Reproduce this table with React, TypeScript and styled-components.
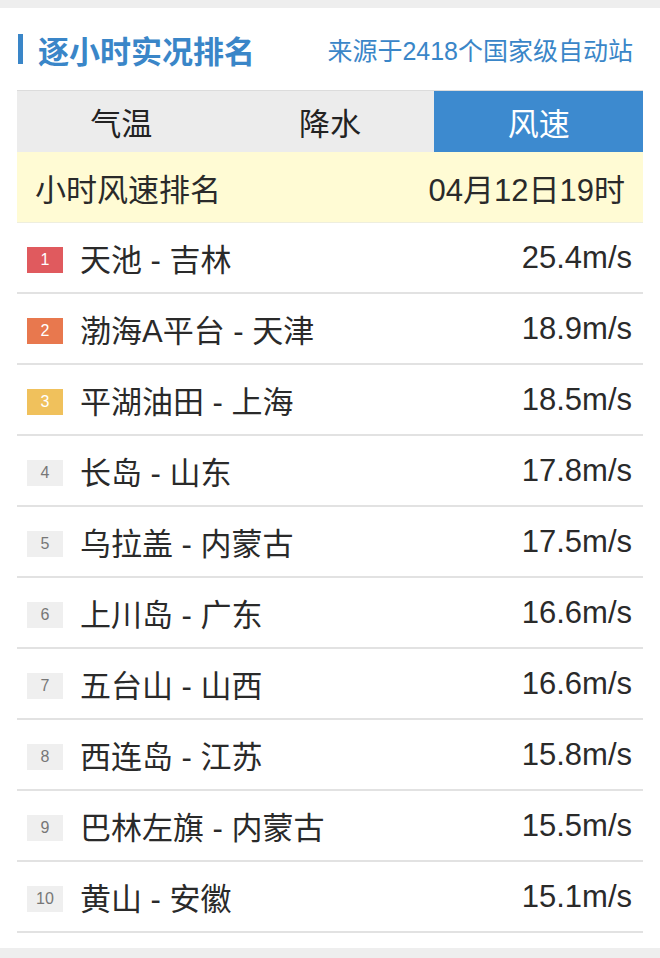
import React from "react";
import styled, { createGlobalStyle } from "styled-components";

const Global = createGlobalStyle`
  html, body { margin: 0; padding: 0; background: #ffffff; }
  body { font-family: "Liberation Sans", "Noto Sans CJK SC", sans-serif; color: #333; }
`;

const Page = styled.div`
  width: 660px;
  height: 958px;
  display: flex;
  flex-direction: column;
  background: #fff;
`;

const Strip = styled.div<{ h: number }>`
  height: ${(p) => p.h}px;
  background: #eeeeee;
  flex-shrink: 0;
`;

const Header = styled.div`
  height: 82px;
  display: flex;
  align-items: center;
  justify-content: space-between;
  padding: 0 27px 0 18px;
`;

const Title = styled.h1`
  margin: 0;
  display: flex;
  align-items: center;
  gap: 15px;
  font-size: 31px;
  font-weight: bold;
  color: #3a86c8;
  font-family: "Noto Sans CJK SC", sans-serif;
  &::before {
    content: "";
    width: 5px;
    height: 30px;
    background: #3a86c8;
  }
`;

const Source = styled.div`
  font-size: 25px;
  color: #3a86c8;
`;

const Card = styled.div`
  margin: 0 17px;
  flex: 1;
`;

const Tabs = styled.div`
  display: grid;
  grid-template-columns: repeat(3, 1fr);
  background: #ececec;
  border-top: 1px solid #dcdcdc;
  height: 61px;
`;

const Tab = styled.div<{ active?: boolean }>`
  display: flex;
  align-items: center;
  justify-content: center;
  font-size: 31px;
  font-family: "Noto Sans CJK SC", sans-serif;
  color: ${(p) => (p.active ? "#fff" : "#222")};
  background: ${(p) => (p.active ? "#3d8acf" : "transparent")};
`;

const SubHeader = styled.div`
  height: 70px;
  background: #fffbd4;
  display: flex;
  align-items: center;
  justify-content: space-between;
  padding: 0 18px;
  font-size: 31px;
  color: #2a2a2a;
  border-bottom: 1px solid #eeeede;
`;

const Row = styled.div`
  height: 69px;
  display: flex;
  align-items: center;
  padding: 0 11px 0 10px;
  border-bottom: 2px solid #e2e2e2;
`;

const badgeColors = ["#e05a5e", "#e8784e", "#f0c15c"];

const Badge = styled.span<{ rank: number }>`
  width: 36px;
  height: 26px;
  display: flex;
  align-items: center;
  justify-content: center;
  font-size: 16px;
  flex-shrink: 0;
  background: ${(p) => (p.rank <= 3 ? badgeColors[p.rank - 1] : "#efefef")};
  color: ${(p) => (p.rank <= 3 ? "#fff" : "#777")};
  margin-top: 4px;
`;

const Name = styled.span`
  margin-left: 17px;
  font-size: 31px;
  color: #2a2a2a;
  flex: 1;
`;

const Value = styled.span`
  font-size: 31px;
  color: #2a2a2a;
`;

const rows = [
  ["天池 - 吉林", "25.4m/s"],
  ["渤海A平台 - 天津", "18.9m/s"],
  ["平湖油田 - 上海", "18.5m/s"],
  ["长岛 - 山东", "17.8m/s"],
  ["乌拉盖 - 内蒙古", "17.5m/s"],
  ["上川岛 - 广东", "16.6m/s"],
  ["五台山 - 山西", "16.6m/s"],
  ["西连岛 - 江苏", "15.8m/s"],
  ["巴林左旗 - 内蒙古", "15.5m/s"],
  ["黄山 - 安徽", "15.1m/s"],
];

export default function App() {
  return (
    <>
      <Global />
      <Page>
        <Strip h={8} />
        <Header>
          <Title>逐小时实况排名</Title>
          <Source>来源于2418个国家级自动站</Source>
        </Header>
        <Card>
          <Tabs>
            <Tab>气温</Tab>
            <Tab>降水</Tab>
            <Tab active>风速</Tab>
          </Tabs>
          <SubHeader>
            <span>小时风速排名</span>
            <span>04月12日19时</span>
          </SubHeader>
          {rows.map(([n, v], i) => (
            <Row key={i}>
              <Badge rank={i + 1}>{i + 1}</Badge>
              <Name>{n}</Name>
              <Value>{v}</Value>
            </Row>
          ))}
        </Card>
        <Strip h={10} />
      </Page>
    </>
  );
}
